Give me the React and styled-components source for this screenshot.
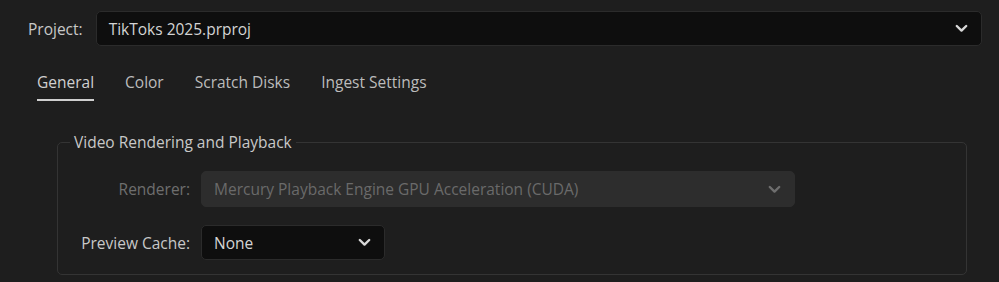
import styled, { createGlobalStyle } from 'styled-components'

const GlobalStyle = createGlobalStyle`
    html, body {
        margin: 0;
        padding: 0;
        background: #1e1e1e;
    }
    body {
        font-family: "Open Sans", "Noto Sans", sans-serif;
        font-size: 15.5px;
        color: #c8c8c8;
    }
`

const Page = styled.div`
    width: 999px;
    height: 282px;
    overflow: hidden;
    background: #1e1e1e;
    box-sizing: border-box;
    padding-top: 11px;
`

const ProjectRow = styled.div`
    display: flex;
    align-items: center;
    gap: 13px;
    padding-left: 28px;
    padding-right: 17px;
`

const Label = styled.span`
    color: ${props => props.$dim ? '#6e6e6e' : '#c8c8c8'};
    white-space: nowrap;
`

const Select = styled.div`
    display: flex;
    align-items: center;
    justify-content: space-between;
    box-sizing: border-box;
    height: ${props => props.$height || '35px'};
    width: ${props => props.$width || 'auto'};
    flex: ${props => props.$grow ? 1 : 'none'};
    padding: 0 13px 0 12px;
    border-radius: 5px;
    background: ${props => props.$disabled ? '#2d2d2d' : '#0e0e0e'};
    border: 1px solid ${props => props.$disabled ? '#2d2d2d' : '#2b2b2b'};
    color: ${props => props.$disabled ? '#6a6a6a' : '#d4d4d4'};
`

const Tabs = styled.div`
    display: flex;
    gap: 31px;
    padding-left: 37px;
    margin-top: 25px;
`

const Tab = styled.div`
    color: ${props => props.$active ? '#d0d0d0' : '#bcbcbc'};
    padding-bottom: 6px;
    border-bottom: 2px solid ${props => props.$active ? '#cfcfcf' : 'transparent'};
    line-height: 22px;
`

const Group = styled.fieldset`
    margin: 32px 32px 0 57px;
    padding: 20px 0 0 12px;
    border: 1px solid #343434;
    border-radius: 5px;
    height: 142px;
    box-sizing: border-box;
`

const Legend = styled.legend`
    padding: 0 4px;
    margin-left: 0;
    color: #c8c8c8;
    line-height: 18px;
`

const FormGrid = styled.div`
    display: grid;
    grid-template-columns: 120px auto;
    column-gap: 11px;
    row-gap: 18px;
    align-items: center;
    justify-items: start;
    & > span {
        justify-self: end;
    }
`

function Chevron({ color }) {
    return (
        <svg width="13" height="9" viewBox="0 0 13 9">
            <path d="M1.8 2 L6.5 6.6 L11.2 2" fill="none" stroke={color} strokeWidth="2.4" strokeLinecap="round" strokeLinejoin="round" />
        </svg>
    )
}

function App() {
    return (
        <>
            <GlobalStyle />
            <Page>
                <ProjectRow>
                    <Label>Project:</Label>
                    <Select $grow>
                        <span>TikToks 2025.prproj</span>
                        <Chevron color="#d8d8d8" />
                    </Select>
                </ProjectRow>

                <Tabs>
                    <Tab $active>General</Tab>
                    <Tab>Color</Tab>
                    <Tab>Scratch Disks</Tab>
                    <Tab>Ingest Settings</Tab>
                </Tabs>

                <Group>
                    <Legend>Video Rendering and Playback</Legend>
                    <FormGrid>
                        <Label $dim>Renderer:</Label>
                        <Select $disabled $width="594px" $height="36px">
                            <span>Mercury Playback Engine GPU Acceleration (CUDA)</span>
                            <Chevron color="#6e6e6e" />
                        </Select>
                        <Label>Preview Cache:</Label>
                        <Select $width="184px" $height="35px">
                            <span>None</span>
                            <Chevron color="#d8d8d8" />
                        </Select>
                    </FormGrid>
                </Group>
            </Page>
        </>
    )
}

export default App
